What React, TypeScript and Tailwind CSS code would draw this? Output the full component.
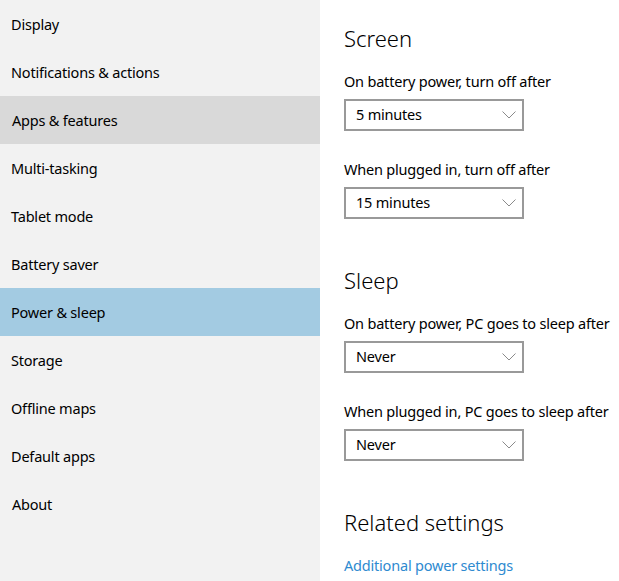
import React from "react";

const items = [
  { label: "Display", state: "", pl: "pl-[11px]" },
  { label: "Notifications & actions", state: "", pl: "pl-[11px]" },
  { label: "Apps & features", state: "hover", pl: "pl-[12px]" },
  { label: "Multi-tasking", state: "", pl: "pl-[11px]" },
  { label: "Tablet mode", state: "", pl: "pl-[11px]" },
  { label: "Battery saver", state: "", pl: "pl-[11px]" },
  { label: "Power & sleep", state: "active", pl: "pl-[11px]" },
  { label: "Storage", state: "", pl: "pl-[11px]" },
  { label: "Offline maps", state: "", pl: "pl-[11px]" },
  { label: "Default apps", state: "", pl: "pl-[11px]" },
  { label: "About", state: "", pl: "pl-[12px]" },
];

function Chevron() {
  return (
    <svg width="14" height="8" viewBox="0 0 14 8" className="shrink-0">
      <path d="M0.5 0.5 L7 7 L13.5 0.5" fill="none" stroke="#8a8a8a" strokeWidth="1" />
    </svg>
  );
}

function Select({ value }: { value: string }) {
  return (
    <div className="flex h-[32px] w-[180px] items-center justify-between border-2 border-[#999999] bg-white pl-[10px] pr-[6px] text-[14.5px] leading-[20px] tracking-[-0.2px] text-black">
      <span className="-mt-[2px]">{value}</span>
      <Chevron />
    </div>
  );
}

const label = "whitespace-nowrap text-[14.5px] leading-[20px] tracking-[-0.2px]";
const heading = "whitespace-nowrap text-[22px] font-light leading-[32px]";

export default function App() {
  return (
    <div
      className="flex h-[581px] w-[619px] overflow-hidden bg-white"
      style={{ fontFamily: '"Noto Sans", "Open Sans", sans-serif' }}
    >
      <div className="flex w-[320px] shrink-0 flex-col bg-[#f2f2f2]">
        {items.map((it) => (
          <div
            key={it.label}
            className={
              "flex h-[48px] items-center pt-[2px] text-[14.5px] tracking-[-0.2px] text-black " +
              it.pl +
              " " +
              (it.state === "hover"
                ? "bg-[#d9d9d9]"
                : it.state === "active"
                ? "bg-[#a3cbe2]"
                : "")
            }
          >
            {it.label}
          </div>
        ))}
      </div>
      <div className="flex flex-1 flex-col pl-[24px] text-black">
        <div className={"mt-[22px] " + heading}>Screen</div>
        <div className={"mt-[17px] " + label}>On battery power, turn off after</div>
        <div className="mt-[8px]"><Select value="5 minutes" /></div>
        <div className={"mt-[28px] " + label}>When plugged in, turn off after</div>
        <div className="mt-[8px]"><Select value="15 minutes" /></div>
        <div className={"mt-[45px] " + heading}>Sleep</div>
        <div className={"mt-[17px] " + label}>On battery power, PC goes to sleep after</div>
        <div className="mt-[8px]"><Select value="Never" /></div>
        <div className={"mt-[28px] " + label}>When plugged in, PC goes to sleep after</div>
        <div className="mt-[8px]"><Select value="Never" /></div>
        <div className={"mt-[45px] " + heading}>Related settings</div>
        <div className={"mt-[17px] text-[#2e8ad0] " + label}>Additional power settings</div>
      </div>
    </div>
  );
}
